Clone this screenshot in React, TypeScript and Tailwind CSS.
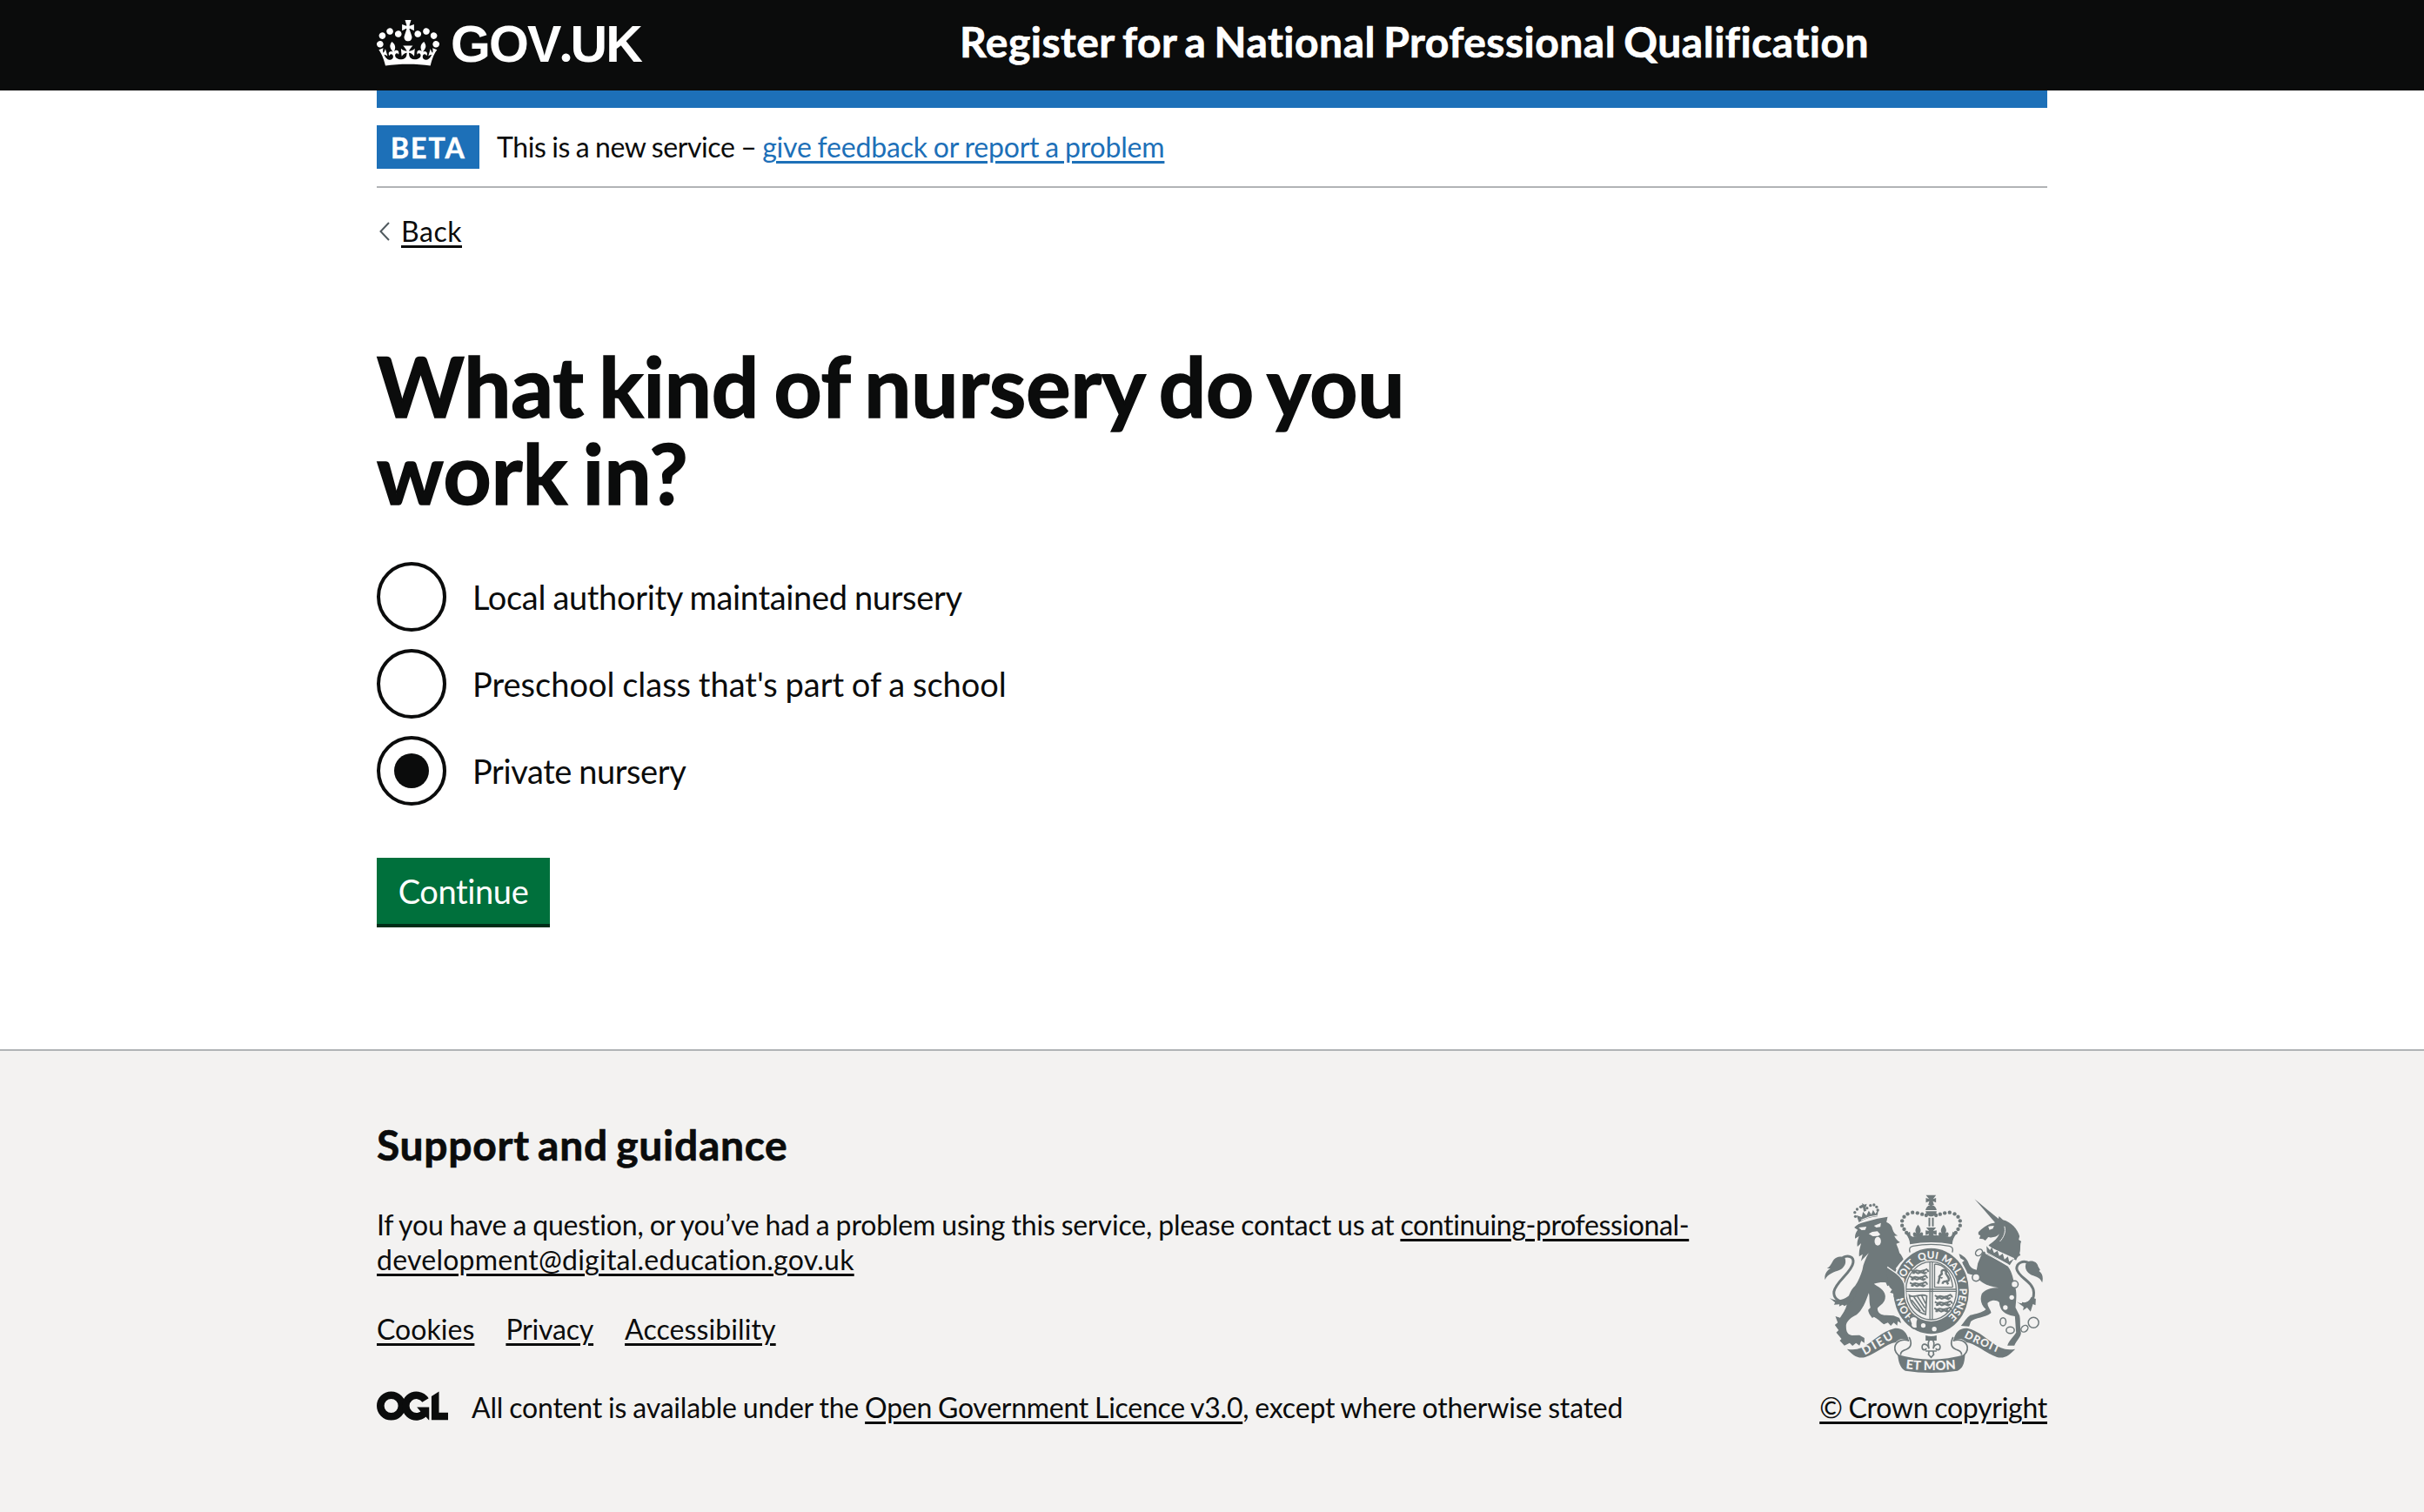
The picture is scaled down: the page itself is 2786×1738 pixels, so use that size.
const ARMS = "#6f797b";
const PAPER = "#f3f2f1";

function Crown() {
  return (
    <svg viewBox="0 0 132 97" className="mt-[23px] h-[53px] w-[72px] shrink-0 fill-white" aria-hidden="true">
      <path
        fillRule="evenodd"
        d="M25 30.2c3.5 1.5 7.7-.2 9.1-3.7 1.5-3.6-.2-7.8-3.9-9.2-3.6-1.4-7.6.3-9.1 3.9-1.4 3.5.3 7.5 3.9 9zM9 39.5c3.6 1.5 7.8-.2 9.2-3.7 1.5-3.6-.2-7.8-3.9-9.1-3.6-1.5-7.6.2-9.1 3.8-1.4 3.5.3 7.5 3.8 9zM4.4 57.2c3.5 1.5 7.7-.2 9.1-3.8 1.5-3.6-.2-7.7-3.9-9.1-3.5-1.5-7.6.3-9.1 3.8-1.4 3.5.3 7.6 3.9 9.1zm38.3-21.4c3.5 1.5 7.7-.2 9.1-3.8 1.5-3.6-.2-7.7-3.9-9.1-3.6-1.5-7.6.3-9.1 3.8-1.3 3.6.4 7.7 3.9 9.1zm64.4-5.6c-3.6 1.5-7.8-.2-9.1-3.7-1.5-3.6.2-7.8 3.8-9.2 3.6-1.4 7.7.3 9.2 3.9 1.3 3.5-.4 7.5-3.9 9zm15.9 9.3c-3.6 1.5-7.7-.2-9.1-3.7-1.5-3.6.2-7.8 3.7-9.1 3.6-1.5 7.7.2 9.2 3.8 1.5 3.5-.3 7.5-3.8 9zm4.7 17.7c-3.6 1.5-7.8-.2-9.2-3.8-1.5-3.6.2-7.7 3.9-9.1 3.6-1.5 7.7.3 9.2 3.8 1.3 3.5-.4 7.6-3.9 9.1zM89.3 35.8c-3.6 1.5-7.8-.2-9.2-3.8-1.4-3.6.2-7.7 3.9-9.1 3.6-1.5 7.7.3 9.2 3.8 1.4 3.6-.3 7.7-3.9 9.1zM69.7 17.7l8.9 4.7V9.3l-8.9 2.8c-.2-.3-.5-.6-.9-.9L72.4 0H59.6l3.5 11.2c-.3.3-.6.5-.9.9l-8.8-2.8v13.1l8.8-4.7c.3.3.6.7.9.9l-5 15.4v.1c-.2.8-.4 1.6-.4 2.4 0 4.1 3.1 7.5 7 8.1h.2c.3 0 .7.1 1 .1.4 0 .7 0 1-.1h.2c4-.6 7.1-4.1 7.1-8.1 0-.8-.1-1.7-.4-2.4V34l-5.1-15.4c.4-.2.7-.6 1-.9zM66 92.8c16.9 0 32.8 1.1 47.1 3.2 4-16.9 8.9-26.7 14-33.5l-9.6-3.4c1 4.9 1.1 7.2 0 10.2-1.5-1.4-3-4.3-4.2-8.7L108.6 76c2.8-2 5-3.2 7.5-3.3-4.4 9.4-10 11.9-13.6 11.2-4.3-.8-6.3-4.6-5.6-7.9 1-4.7 5.7-5.9 8-.5 4.3-8.7-3-11.4-7.6-8.8 7.1-7.2 7.9-13.5 2.1-21.1-8 6.1-8.1 12.3-4.5 20.8-4.7-5.4-12.1-2.5-9.5 6.2 3.4-5.2 7.9-2 7.2 3.1-.6 4.3-6.4 7.8-13.5 7.2-10.3-.9-10.9-8-11.2-13.8 2.5-.5 7.1 1.8 11 7.3L80.2 60c-4.1 4.4-8 5.3-12.3 5.4 1.4-4.4 8-11.6 8-11.6H55.5s6.4 7.2 7.9 11.6c-4.2-.1-8-1-12.3-5.4l1.4 16.4c3.9-5.5 8.5-7.7 10.9-7.3-.3 5.8-.9 12.8-11.1 13.8-7.2.6-12.9-2.9-13.5-7.2-.7-5 3.8-8.3 7.1-3.1 2.7-8.7-4.6-11.6-9.4-6.2 3.7-8.5 3.6-14.7-4.6-20.8-5.8 7.6-5 13.9 2.2 21.1-4.7-2.6-11.9.1-7.7 8.8 2.3-5.5 7.1-4.2 8.1.5.7 3.3-1.3 7.1-5.7 7.9-3.5.7-9-1.8-13.5-11.2 2.5.1 4.7 1.3 7.5 3.3l-4.7-15.4c-1.2 4.4-2.7 7.2-4.3 8.7-1.1-3-.9-5.3 0-10.2l-9.5 3.4c5 6.9 9.9 16.7 14 33.5 14.8-2.1 30.8-3.2 47.7-3.2z"
      />
    </svg>
  );
}

function OglMark() {
  return (
    <svg viewBox="0 0 483.2 195.7" className="mt-[1px] h-[34px] w-[82px] shrink-0" fill="#0b0c0c" aria-label="OGL" role="img">
      <circle cx="97.8" cy="97.8" r="72.4" fill="none" stroke="#0b0c0c" strokeWidth="50.7" />
      <path d="M330 60A72.4 72.4 0 1 0 330 136" fill="none" stroke="#0b0c0c" strokeWidth="50.7" />
      <path d="M272 106h83v88h-3l-22-26-34-34z" />
      <path d="M421.5 142.8V.1l-50.7 32.3v161.1h112.4v-50.7z" />
    </svg>
  );
}

const beads: [number, number][] = [
  [430, 142], [416, 138], [400, 134], [383, 132], [366, 137], [354, 147], [347, 161], [347, 177], [354, 190], [362, 202],
];

function RoyalLion({ x, y }: { x: number; y: number }) {
  return (
    <path
      transform={`translate(${x} ${y})`}
      fill="none"
      stroke={ARMS}
      strokeWidth="6"
      d="M2 4l8 5 10-3 14 3 12-3 12-5M6 16l10-5 10 5 10-4 12 5 8-5M12 9v9M30 9v8M46 8v8M58 3l4 8"
    />
  );
}

function RibbonHalf() {
  return (
    <g>
      <path
        fill={ARMS}
        d="M157 603C176 606 192 605 206 599C246 580 276 542 320 532C346 529 364 543 371 577C357 566 340 564 325 580C290 586 262 616 220 631C192 638 176 622 157 603Z"
      />
      <path fill="none" stroke={ARMS} strokeWidth="5" d="M371 575C352 566 326 574 322 596C320 612 330 622 342 630M371 562C382 582 378 598 362 604C350 608 340 612 342 624" />
    </g>
  );
}

function RoyalArms() {
  return (
    <svg viewBox="80 70 752 618" className="h-[206px] w-[251px]" aria-hidden="true">
      <defs>
        <path id="motto" d="M447 513A98 111 0 0 1 447 291A98 111 0 0 1 447 513" />
        <path id="dieu" d="M219 624Q262 600 330 559" />
        <path id="droit" d="M560 562Q610 588 680 617" />
        <path id="etmon" d="M359 671Q447 681 536 671" />
      </defs>

      {/* Lion supporter */}
      <g fill={ARMS}>
        <path d="M182 184C190 175 200 170 215 166L262 153L280 150L297 147L293 165C305 170 312 178 314 190C318 202 324 208 332 212L320 213C326 224 332 230 340 235L327 240C332 252 336 262 338 272C346 280 350 290 354 300L342 303L325 325C338 345 354 362 356 382L358 430L347 422L339 432L331 420L318 425L317 412L306 408L312 398L303 388L312 380L296 386L291 374C280 372 262 374 250 378C262 388 287 396 289 420C290 445 270 452 262 462C262 478 274 486 292 486L318 488L338 496L344 514L332 507L330 522L318 512L308 523L298 512L284 518C272 508 262 498 250 492L244 496C236 486 230 476 230 468L238 460C232 440 236 420 232 410C222 440 208 472 190 485C170 495 158 505 154 520C153 545 160 553 174 556L200 555L217 565L217 582L206 575L200 591L188 582L176 592L166 582L148 591L132 574L138 568L120 546L128 538L115 520L125 512L117 490L133 495C142 482 152 468 157 448C160 425 168 400 185 385C197 368 203 350 210 330C213 310 222 290 232 272C222 282 214 290 205 300L211 276L199 284C197 262 203 250 206 238L193 250C190 235 195 225 198 214L185 222C183 210 188 200 194 192Z" />
        <path d="M150 290C138 280 120 284 112 294C104 304 104 314 88 325L100 325C88 332 78 345 81 364C92 342 112 338 132 330C148 322 156 306 150 290Z" />
        <path d="M97 427C120 440 150 440 186 398L190 412C178 436 164 448 148 455L142 450L130 456L131 449L112 450L116 443Z" />
        <path d="M190 142L198 166Q228 148 262 146L265 122L255 137L247 123L241 139L232 126L224 143L212 130L208 148Z" />
      </g>
      <path fill="none" stroke={ARMS} strokeWidth="9" d="M142 288C160 278 182 284 178 306C172 340 118 370 112 405C110 425 124 440 150 440" />
      <path fill={PAPER} d="M197 184L224 181L220 192L207 193ZM250 178L274 168L272 182L258 184ZM232 206L244 199L262 197L272 208L264 213L246 214Z" />
      <ellipse cx="263" cy="231" rx="11" ry="15" fill={PAPER} />
      <path fill="none" stroke={PAPER} strokeWidth="3" d="M206 158Q236 144 264 142" />
      <g fill={ARMS}>
        {[[186, 146], [184, 132], [192, 121], [204, 113], [226, 117], [238, 108], [250, 106], [259, 113], [263, 124]].map(([x, y]) => (
          <circle key={x} cx={x} cy={y} r="5" />
        ))}
        <path d="M209 100l8 5 8-3-2 10-3 1 4 13-9 3-3-14-8 2 1-10 5-1z" />
      </g>

      {/* Unicorn supporter */}
      <g fill={ARMS}>
        <path d="M597 86L684 158L670 170Z" />
        <path d="M610 200C625 184 645 170 664 168L678 162L681 145L695 158C722 164 746 190 752 214L749 226L758 232C752 240 757 262 752 272L755 280C746 282 744 288 740 297L722 288L716 292C695 280 668 262 645 246C652 238 674 228 682 206C672 218 656 220 644 217L634 229L626 224L613 222L617 212L610 208Z" />
        <path d="M628 266C618 280 614 296 608 308L604 330C590 328 580 320 574 302C566 286 552 278 543 275L548 290L562 298L554 304L563 326L548 326L556 336C570 344 588 344 602 352C620 378 650 388 680 392C658 390 634 396 622 412C614 432 620 452 636 466C622 478 602 482 582 486C570 494 562 508 550 523L578 525L584 508C600 494 636 494 654 478C652 466 640 456 642 444C652 434 672 432 682 442C684 462 692 484 736 490L740 546C730 562 716 572 710 591L734 591C742 574 756 562 757 548C752 528 756 506 752 488L738 460C740 432 744 410 736 386C730 364 728 340 712 318Z" />
        <path d="M776 304C792 294 812 300 816 318L823 330L819 334C832 342 834 358 830 374C822 352 800 352 790 346C772 336 768 318 776 304Z" />
        <path d="M742 440C760 452 784 444 792 424L808 430L807 452L798 448L790 474L778 460L764 470L766 458Z" />
      </g>
      <path fill="none" stroke={ARMS} strokeWidth="9" d="M784 306C764 296 742 306 742 326C746 356 800 370 801 408C802 440 780 450 760 446" />
      <path fill={PAPER} d="M644 180L664 178L660 188L648 192ZM634 244L734 290L718 320L634 274Z" />
      <path fill={ARMS} d="M638 248L650 262L656 252L664 272L676 264L682 282L694 274L700 294L712 284L716 302L732 292L718 314L640 274Z" />
      <path fill="none" stroke={PAPER} strokeWidth="3" d="M700 180C706 200 696 220 684 232M634 268L714 312" />
      <g fill="none" stroke={ARMS} strokeWidth="4.5">
        <ellipse cx="612" cy="270" rx="13" ry="10" transform="rotate(-40 612 270)" />
        <circle cx="602" cy="356" r="13" fill={PAPER} />
        <circle cx="735" cy="380" r="12" fill={PAPER} />
        <ellipse cx="695" cy="509" rx="10" ry="14" />
        <ellipse cx="720" cy="538" rx="14" ry="11" />
        <ellipse cx="769" cy="533" rx="13" ry="10" transform="rotate(-40 769 533)" />
        <circle cx="800" cy="512" r="18" />
      </g>
      <g fill={PAPER}>
        <circle cx="594" cy="296" r="8" />
        <circle cx="725" cy="425" r="8" />
        <circle cx="703" cy="460" r="8" />
      </g>

      {/* Garter and shield */}
      <ellipse cx="447" cy="403" rx="137" ry="153" fill={PAPER} />
      <ellipse cx="447" cy="403" rx="130" ry="148" fill={ARMS} />
      <ellipse cx="447" cy="402" rx="93" ry="106" fill={PAPER} />
      <ellipse cx="447" cy="402" rx="87" ry="100" fill="none" stroke={ARMS} strokeWidth="4" />
      <path stroke={ARMS} strokeWidth="4" fill="none" d="M443 302V502M451 302V502M360 397H534M360 404H534M459 310V390H522M459 310C490 310 515 335 522 390" />
      <RoyalLion x={376} y={326} />
      <RoyalLion x={372} y={348} />
      <RoyalLion x={372} y={370} />
      <RoyalLion x={458} y={414} />
      <RoyalLion x={458} y={436} />
      <RoyalLion x={456} y={458} />
      <path fill="none" stroke={ARMS} strokeWidth="7" d="M470 378C480 360 470 350 484 344C480 330 490 326 500 336C490 344 512 352 508 366C500 376 490 362 486 378M472 352l14 6M506 380l-8-14" />
      <path fill="none" stroke={ARMS} strokeWidth="5" d="M372 418C390 430 410 408 432 420L428 484C400 476 376 450 372 418ZM388 424L424 476M400 422L426 462M414 418L428 446M380 434L410 472" />
      <g fill={PAPER} fontFamily="Lato, sans-serif" fontWeight="900" fontSize="35" textAnchor="middle">
        <text><textPath href="#motto" startOffset="15.5%">HON</textPath></text>
        <text><textPath href="#motto" startOffset="35%">SOIT</textPath></text>
        <text><textPath href="#motto" startOffset="48.5%">QUI</textPath></text>
        <text><textPath href="#motto" startOffset="61%">MAL</textPath></text>
        <text><textPath href="#motto" startOffset="70%">Y</textPath></text>
        <text><textPath href="#motto" startOffset="82%">PENSE</textPath></text>
      </g>
      <path fill={PAPER} stroke={ARMS} strokeWidth="5" d="M372 500C380 486 396 488 402 500C398 508 398 518 400 530C388 536 374 528 378 516Z" />
      <path fill={PAPER} d="M412 522a8 8 0 1 0 16 0a8 8 0 1 0-16 0M450 534a8 8 0 1 0 16 0a8 8 0 1 0-16 0" />
      <path fill={ARMS} d="M292 318L324 340C346 358 354 372 354 388L357 430L347 422L339 432L331 420L318 425L317 412L306 408L312 398L303 388L296 360Z" />
      <path fill="none" stroke={PAPER} strokeWidth="4" d="M296 320L328 342C350 360 358 374 357 392L359 430" />

      {/* Crown */}
      <path fill={PAPER} d="M370 240H524L522 264Q500 258 447 254Q396 258 372 266Z" />
      <g fill={ARMS}>
        {beads.map(([x, y]) => (
          <g key={x}>
            <circle cx={x} cy={y} r="6.5" />
            <circle cx={894 - x} cy={y} r="6.5" />
          </g>
        ))}
        <path d="M429 72H464L454 86L464 82V98L453 93L457 106H437L441 93L429 98V82L440 86ZM428 124C430 112 440 106 447 106C454 106 464 112 466 124ZM428 128H466C466 142 454 146 447 146C440 146 430 142 428 128Z" />
        <path d="M438 150H444V180H438ZM450 150H456V180H450ZM430 184H464L454 196L466 194V210L454 206L460 222H434L440 206L428 210V194L440 196Z" />
        <path d="M402 174C414 190 412 196 408 204C416 196 424 204 416 216H388C380 204 388 196 396 204C392 196 390 190 402 174ZM490 174C502 190 500 196 496 204C504 196 512 204 504 216H476C468 204 476 196 484 204C480 196 478 190 490 174Z" />
        <path d="M360 206L374 198L376 212L384 216Q447 204 512 216L518 212L522 198L534 206Q520 224 520 242Q447 228 374 242Q374 224 360 206Z" />
      </g>
      <path fill="none" stroke={ARMS} strokeWidth="4" d="M374 270C370 256 374 250 384 248Q447 236 510 248C520 250 524 256 520 270" />

      {/* Motto scrolls */}
      <RibbonHalf />
      <g transform="translate(894 0) scale(-1 1)">
        <RibbonHalf />
      </g>
      <path fill={ARMS} d="M332 622Q447 656 564 622C562 654 556 670 538 678Q447 692 358 678C342 670 334 650 332 622Z" />
      <path fill={ARMS} d="M428 556Q447 562 466 556V574H428Z" />
      <path fill="none" stroke={ARMS} strokeWidth="5" d="M447 564C432 580 438 590 440 602C434 582 414 582 416 598C418 610 430 606 430 600M447 564C462 580 456 590 454 602C460 582 480 582 478 598C476 610 464 606 464 600M428 610H466M440 610L438 622L447 632L456 622L454 610" />
      <g fill={PAPER} fontFamily="Lato, sans-serif" fontWeight="900">
        <text fontSize="40"><textPath href="#dieu" textLength="116">DIEU</textPath></text>
        <text fontSize="37"><textPath href="#droit" textLength="130">DROIT</textPath></text>
        <text fontSize="44"><textPath href="#etmon" textLength="174">ET MON</textPath></text>
      </g>
    </svg>
  );
}

const link = "underline decoration-[3px] underline-offset-[4px]";

const options = [
  { label: "Local authority maintained nursery", tracking: "tracking-[-0.33px]", checked: false },
  { label: "Preschool class that's part of a school", tracking: "tracking-[0px]", checked: false },
  { label: "Private nursery", tracking: "tracking-[-0.42px]", checked: true },
];

export default function App() {
  return (
    <div className="flex min-h-[1738px] flex-col bg-white font-['Lato',sans-serif] text-[32px] leading-[40px] text-[#0b0c0c]">
      <header className="h-[104px] bg-[#0b0c0c] text-white">
        <div className="mx-auto flex w-[1920px] items-start">
          <a href="#" className="flex w-[670px] items-start">
            <Crown />
            <span className="ml-[13px] mt-[14px] font-['Liberation_Sans',sans-serif] text-[59px] font-bold leading-[70px] tracking-[-1.9px]">
              GOV<span className="font-['Lato',sans-serif] font-black">.</span>UK
            </span>
          </a>
          <a href="#" className="mt-[18px] whitespace-nowrap text-[48px] font-bold leading-[60px] tracking-[0.5px] [-webkit-text-stroke:0.7px] [word-spacing:-3px]">
            Register for a National Professional Qualification
          </a>
        </div>
      </header>

      <div className="mx-auto w-[1920px]">
        <div className="h-[20px] bg-[#1d70b8]" />
        <div className="flex items-center border-b-2 border-[#b1b4b6] py-[20px]">
          <strong className="mr-[20px] h-[50px] w-[118px] bg-[#1d70b8] pl-[16px] pt-[6px] font-bold tracking-[2px] text-white [-webkit-text-stroke:0.5px]">BETA</strong>
          <p className="tracking-[-0.4px] [word-spacing:-1px]">
            This is a new service –{" "}
            <a href="#" className={`${link} tracking-[-0.2px] text-[#1d70b8]`}>
              give feedback or report a problem
            </a>
          </p>
        </div>

        <a href="#" className="mt-[30px] flex w-fit items-center">
          <svg viewBox="0 0 12 22" className="mr-[13px] ml-[3px] h-[22px] w-[12px]" fill="none" stroke="#505a5f" strokeWidth="2" aria-hidden="true">
            <path d="M11 1L1.5 11L11 21" />
          </svg>
          <span className={`${link} tracking-[0.53px]`}>Back</span>
        </a>

        <main className="pt-[107px]">
          <h1 className="text-[96px] font-bold leading-[100px] [-webkit-text-stroke:1.6px] [word-spacing:-6px]">
            <span className="block tracking-[-0.05px]">What kind of nursery do you</span>
            <span className="block tracking-[0.2px]">work in?</span>
          </h1>

          <div className="mt-[53px] flex flex-col gap-[20px]">
            {options.map((o) => (
              <label key={o.label} className="flex h-[80px] items-center">
                <span className="flex size-[80px] items-center justify-center rounded-full border-4 border-[#0b0c0c]">
                  {o.checked && <span className="size-[40px] rounded-full bg-[#0b0c0c]" />}
                </span>
                <span className={`ml-[30px] text-[38px] leading-[50px] [word-spacing:-1px] ${o.tracking}`}>{o.label}</span>
              </label>
            ))}
          </div>

          <button className="mt-[60px] block h-[80px] w-[199px] border-b-4 border-[#002d18] bg-[#00703c] text-center text-[38px] leading-[76px] tracking-[-0.38px] text-white">
            Continue
          </button>
        </main>
      </div>

      <footer className="mt-[140px] grow border-t-2 border-[#b1b4b6] bg-[#f3f2f1]">
        <div className="mx-auto flex w-[1920px] items-end justify-between pt-[78px]">
          <div>
            <h2 className="text-[48px] font-bold leading-[60px] tracking-[0.7px] [-webkit-text-stroke:0.7px] [word-spacing:-3px]">Support and guidance</h2>
            <p className="mt-[42px] tracking-[-0.16px] [word-spacing:-1px]">
              If you have a question, or you’ve had a problem using this service, please contact us at{" "}
              <a href="#" className={link}>
                <span className="tracking-[-0.37px]">continuing-professional-</span>
                <br />
                <span className="tracking-[0.24px]">development@digital.education.gov.uk</span>
              </a>
            </p>
            <ul className="mt-[40px] flex gap-[36px]">
              <li><a href="#" className={`${link} tracking-[0.05px]`}>Cookies</a></li>
              <li><a href="#" className={`${link} tracking-[-0.2px]`}>Privacy</a></li>
              <li><a href="#" className={`${link} tracking-[0.1px]`}>Accessibility</a></li>
            </ul>
            <div className="mt-[50px] flex items-start">
              <OglMark />
              <p className="ml-[27px] tracking-[-0.18px] [word-spacing:-1px]">
                All content is available under the{" "}
                <a href="#" className={`${link} tracking-[-0.26px]`}>Open Government Licence v3.0</a>, except where otherwise stated
              </p>
            </div>
          </div>
          <div className="flex flex-col items-center">
            <RoyalArms />
            <a href="#" className={`${link} mt-[19px] tracking-[-0.27px] [word-spacing:-1px]`}>© Crown copyright</a>
          </div>
        </div>
      </footer>
    </div>
  );
}
